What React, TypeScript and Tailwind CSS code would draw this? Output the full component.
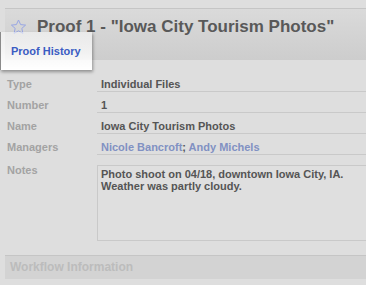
import React from "react";

const rows: { label: string; value: React.ReactNode }[] = [
  { label: "Type", value: "Individual Files" },
  { label: "Number", value: "1" },
  { label: "Name", value: "Iowa City Tourism Photos" },
  {
    label: "Managers",
    value: (
      <>
        <a className="text-[#8191c3]">Nicole Bancroft</a>; <a className="text-[#8191c3]">Andy Michels</a>
      </>
    ),
  },
];

function Star() {
  return (
    <svg width="17" height="16" viewBox="0 0 17 16" className="mt-[2px] shrink-0">
      <path
        d="M8.5 1 L10.6 5.6 L15.6 6.1 L11.8 9.4 L12.9 14.4 L8.5 11.8 L4.1 14.4 L5.2 9.4 L1.4 6.1 L6.4 5.6 Z"
        fill="none"
        stroke="#98a6e4"
        strokeWidth="1"
        strokeLinejoin="round"
      />
    </svg>
  );
}

export default function App() {
  return (
    <div className="relative w-[366px] h-[285px] overflow-hidden bg-[#dedede] font-['Liberation_Sans',Arial,sans-serif] font-bold text-[11px]">
      <div className="h-[8px]" />
      <div className="ml-[5px] h-[52px] border-t border-[#c5c5c5] bg-gradient-to-b from-[#dadada] to-[#cdcdcd] flex items-start pt-[8px] pl-[5px]">
        <Star />
        <h1 className="ml-[10px] text-[17px] leading-[20px] text-[#595959] whitespace-nowrap">
          Proof 1 - "Iowa City Tourism Photos"
        </h1>
      </div>

      <div className="absolute left-0 top-[32px] w-[92px] h-[38px] border-l border-[#8a8a8a] bg-gradient-to-b from-white/50 via-white/70 to-white shadow-[1px_2px_3px_rgba(0,0,0,0.35)]">
        <a className="block pl-[10px] pt-[13px] leading-[13px] text-[#3a5cc3]">Proof History</a>
      </div>

      <div className="mt-[11px]">
        {rows.map((r) => (
          <div key={r.label} className="flex items-start h-[21px]">
            <div className="w-[97px] shrink-0 pl-[7px] pt-[7px] leading-[13px] text-[#a3a3a3]">{r.label}</div>
            <div className="flex-1 h-[21px] border-b border-[#c9c9c9] pl-[4px] pt-[7px] leading-[13px] text-[#555] whitespace-nowrap">
              {r.value}
            </div>
          </div>
        ))}
        <div className="flex items-start">
          <div className="w-[97px] shrink-0 pl-[7px] pt-[9px] leading-[13px] text-[#a3a3a3]">Notes</div>
          <div className="mt-[10px] w-[290px] shrink-0 h-[76px] border border-[#c9c9c9] bg-[#dfdfdf] px-[3px] pt-[2px] leading-[12px] text-[#555] whitespace-nowrap">
            Photo shoot on 04/18, downtown Iowa City, IA.
            <br />
            Weather was partly cloudy.
          </div>
        </div>
      </div>

      <div className="mt-[14px] ml-[5px] h-[24px] border-t border-[#c5c5c5] bg-[#d3d3d3] pl-[5px] pt-[4px] text-[12px] leading-[14px] text-[#bcbcbc]">
        Workflow Information
      </div>
    </div>
  );
}
